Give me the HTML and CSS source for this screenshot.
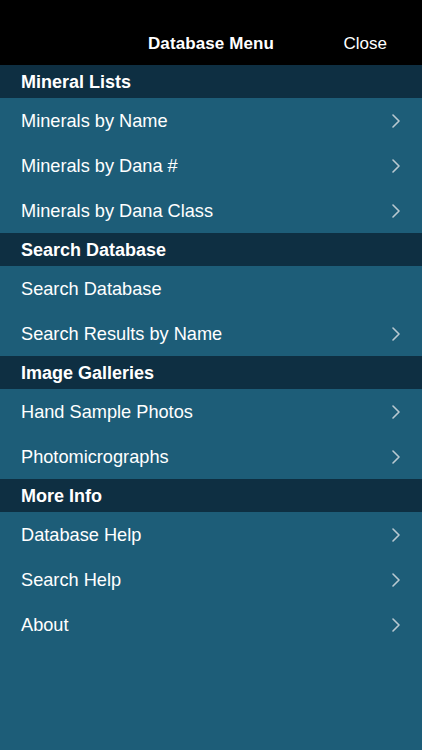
FILE: index.html
```html
<!DOCTYPE html>
<html>
<head>
<meta charset="utf-8">
<link rel="stylesheet" href="styles.css">
</head>
<body>
<div class="app">
  <div class="navbar">
    <div class="nav-title">Database Menu</div>
    <div class="nav-close">Close</div>
  </div>
  <div class="menu">
    <div class="section">Mineral Lists</div>
    <div class="row"><span>Minerals by Name</span><svg class="chev" viewBox="0 0 8 14"><path d="M1 1l6 6-6 6"/></svg></div>
    <div class="row"><span>Minerals by Dana #</span><svg class="chev" viewBox="0 0 8 14"><path d="M1 1l6 6-6 6"/></svg></div>
    <div class="row"><span>Minerals by Dana Class</span><svg class="chev" viewBox="0 0 8 14"><path d="M1 1l6 6-6 6"/></svg></div>
    <div class="section">Search Database</div>
    <div class="row"><span>Search Database</span></div>
    <div class="row"><span>Search Results by Name</span><svg class="chev" viewBox="0 0 8 14"><path d="M1 1l6 6-6 6"/></svg></div>
    <div class="section">Image Galleries</div>
    <div class="row"><span>Hand Sample Photos</span><svg class="chev" viewBox="0 0 8 14"><path d="M1 1l6 6-6 6"/></svg></div>
    <div class="row"><span>Photomicrographs</span><svg class="chev" viewBox="0 0 8 14"><path d="M1 1l6 6-6 6"/></svg></div>
    <div class="section">More Info</div>
    <div class="row"><span>Database Help</span><svg class="chev" viewBox="0 0 8 14"><path d="M1 1l6 6-6 6"/></svg></div>
    <div class="row"><span>Search Help</span><svg class="chev" viewBox="0 0 8 14"><path d="M1 1l6 6-6 6"/></svg></div>
    <div class="row"><span>About</span><svg class="chev" viewBox="0 0 8 14"><path d="M1 1l6 6-6 6"/></svg></div>
  </div>
</div>
</body>
</html>
```
FILE: styles.css
```css
html, body {
  margin: 0;
  padding: 0;
  background: #1d5d78;
}
.app {
  width: 422px;
  height: 750px;
  display: flex;
  flex-direction: column;
  background: #1d5d78;
  font-family: "Liberation Sans", Arial, sans-serif;
  color: #ffffff;
}
.navbar {
  height: 65px;
  background: #000000;
  display: grid;
  grid-template-columns: 1fr auto 1fr;
  align-items: center;
  padding-top: 22px;
  box-sizing: border-box;
}
.nav-title {
  grid-column: 2;
  font-size: 17px;
  font-weight: bold;
  letter-spacing: 0.1px;
}
.nav-close {
  grid-column: 3;
  justify-self: end;
  padding-right: 35px;
  font-size: 17px;
}
.menu {
  display: flex;
  flex-direction: column;
}
.section {
  height: 33px;
  box-sizing: border-box;
  padding-top: 1px;
  background: #0e2f42;
  display: flex;
  align-items: center;
  padding-left: 21px;
  font-size: 18px;
  font-weight: bold;
}
.row {
  height: 45px;
  box-sizing: border-box;
  display: flex;
  align-items: center;
  justify-content: space-between;
  padding: 2px 22px 0 21px;
  font-size: 18.2px;
}
.chev {
  width: 8px;
  height: 14px;
  margin-top: -2px;
  fill: none;
  stroke: #b9c9d1;
  stroke-width: 1.6;
  stroke-linecap: round;
  stroke-linejoin: round;
}
```
